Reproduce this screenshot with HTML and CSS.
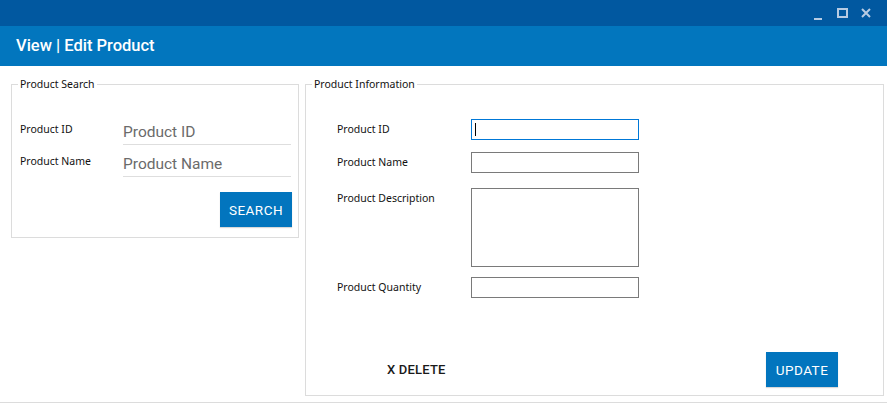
FILE: index.html
```html
<!DOCTYPE html>
<html>
<head>
<meta charset="utf-8">
<link rel="stylesheet" href="styles.css">
</head>
<body>
<div class="window">
  <div class="chrome">
    <div class="controls">
      <svg class="ctl" width="14" height="14" viewBox="0 0 14 14"><rect x="2" y="10" width="8" height="2" fill="#b7cbe3"/></svg>
      <svg class="ctl" width="14" height="14" viewBox="0 0 14 14"><rect x="2" y="1" width="9" height="8" fill="none" stroke="#b7cbe3" stroke-width="2"/></svg>
      <svg class="ctl" width="14" height="14" viewBox="0 0 14 14"><path d="M2 1 L10 9 M10 1 L2 9" stroke="#b7cbe3" stroke-width="2" fill="none"/></svg>
    </div>
  </div>
  <div class="header">View | Edit Product</div>
  <div class="content">
    <fieldset class="box search">
      <legend>Product Search</legend>
      <div class="srow">
        <label class="lbl">Product ID</label>
        <input class="line" type="text" placeholder="Product ID">
      </div>
      <div class="srow">
        <label class="lbl">Product Name</label>
        <input class="line" type="text" placeholder="Product Name">
      </div>
      <div class="actions">
        <button class="btn">SEARCH</button>
      </div>
    </fieldset>
    <fieldset class="box info">
      <legend>Product Information</legend>
      <div class="form">
        <div class="frow r-id">
          <label class="lbl">Product ID</label>
          <div class="tb focus"><span class="caret"></span></div>
        </div>
        <div class="frow r-name">
          <label class="lbl">Product Name</label>
          <div class="tb"></div>
        </div>
        <div class="frow r-desc">
          <label class="lbl">Product Description</label>
          <div class="tb area"></div>
        </div>
        <div class="frow r-qty">
          <label class="lbl">Product Quantity</label>
          <div class="tb"></div>
        </div>
      </div>
      <div class="footer">
        <button class="flat">X DELETE</button>
        <button class="btn">UPDATE</button>
      </div>
    </fieldset>
  </div>
  <div class="bottomline"></div>
</div>
</body>
</html>
```

FILE: styles.css
```css
html, body {
  margin: 0;
  padding: 0;
  background: #ffffff;
}
body {
  font-family: "Noto Sans", "Open Sans", sans-serif;
  color: #111;
}
.window {
  width: 887px;
  height: 404px;
  overflow: hidden;
}
.chrome {
  height: 26px;
  background: #0158a0;
  display: flex;
  justify-content: flex-end;
  align-items: flex-start;
}
.controls {
  display: flex;
  gap: 10px;
  padding: 8px 13px 0 0;
}
.ctl { display: block; }
.header {
  height: 40px;
  background: #0276be;
  color: #fff;
  font-family: Roboto, sans-serif;
  font-weight: 500;
  font-size: 16.5px;
  line-height: 40px;
  padding-left: 16px;
  box-sizing: border-box;
  letter-spacing: 0;
}
.content {
  display: flex;
  align-items: flex-start;
  gap: 6px;
  padding: 11px 0 0 11px;
}
.box {
  margin: 0;
  border: 1px solid #dcdcdc;
  box-sizing: border-box;
  min-width: 0;
}
.box legend {
  font-size: 10.5px;
  line-height: 15px;
  padding: 0 2px;
  color: #111;
}
.search legend { margin-left: -2px; }
.info legend { margin-left: -25px; }
.search {
  width: 288px;
  padding: 28px 6px 10px 8px;
}
.lbl {
  font-size: 10.5px;
  color: #111;
}
.srow {
  display: flex;
  align-items: flex-start;
  margin-bottom: 7px;
}
.srow .lbl {
  width: 103px;
  flex: none;
  line-height: 15px;
  padding-top: 2px;
}
.line {
  width: 168px;
  height: 25px;
  box-sizing: border-box;
  border: none;
  border-bottom: 1px solid #dedede;
  padding: 0;
  margin: 0;
  font-family: Roboto, sans-serif;
  font-size: 15.5px;
  color: #666;
  outline: none;
  background: transparent;
}
.line::placeholder { color: #6b6b6b; }
.actions {
  display: flex;
  justify-content: flex-end;
  margin-top: 15px;
}
.btn {
  width: 72px;
  height: 35px;
  border: none;
  background: #0275be;
  color: #fff;
  font-family: Roboto, sans-serif;
  font-weight: 400;
  font-size: 13.5px;
  letter-spacing: 0.5px;
  padding: 0;
  margin: 0;
  box-shadow: 0 1px 1px rgba(0,0,0,0.15);
}
.info {
  width: 579px;
  height: 319px;
  padding: 27px 45px 8px 31px;
  display: flex;
  flex-direction: column;
}
.form {
  display: flex;
  flex-direction: column;
}
.frow {
  display: flex;
  align-items: center;
}
.frow .lbl {
  width: 134px;
  flex: none;
  line-height: 21px;
}
.r-name { margin-top: 12px; }
.r-desc { margin-top: 15px; align-items: flex-start; }
.r-qty { margin-top: 10px; }
.tb {
  width: 168px;
  height: 21px;
  box-sizing: border-box;
  border: 1px solid #7a7a7a;
  position: relative;
}
.tb.focus { border-color: #0078d7; }
.tb.area { height: 79px; }
.caret {
  position: absolute;
  left: 3px;
  top: 3px;
  width: 1px;
  height: 13px;
  background: #000;
}
.footer {
  margin-top: auto;
  display: flex;
  align-items: center;
  justify-content: space-between;
}
.flat {
  border: none;
  background: transparent;
  font-family: Roboto, sans-serif;
  font-weight: 500;
  font-size: 13px;
  color: #1a1a1a;
  padding: 0;
  margin-left: 50px;
  letter-spacing: 0.2px;
}
.bottomline {
  margin-top: 6px;
  border-top: 1px solid #dcdcdc;
}
```
